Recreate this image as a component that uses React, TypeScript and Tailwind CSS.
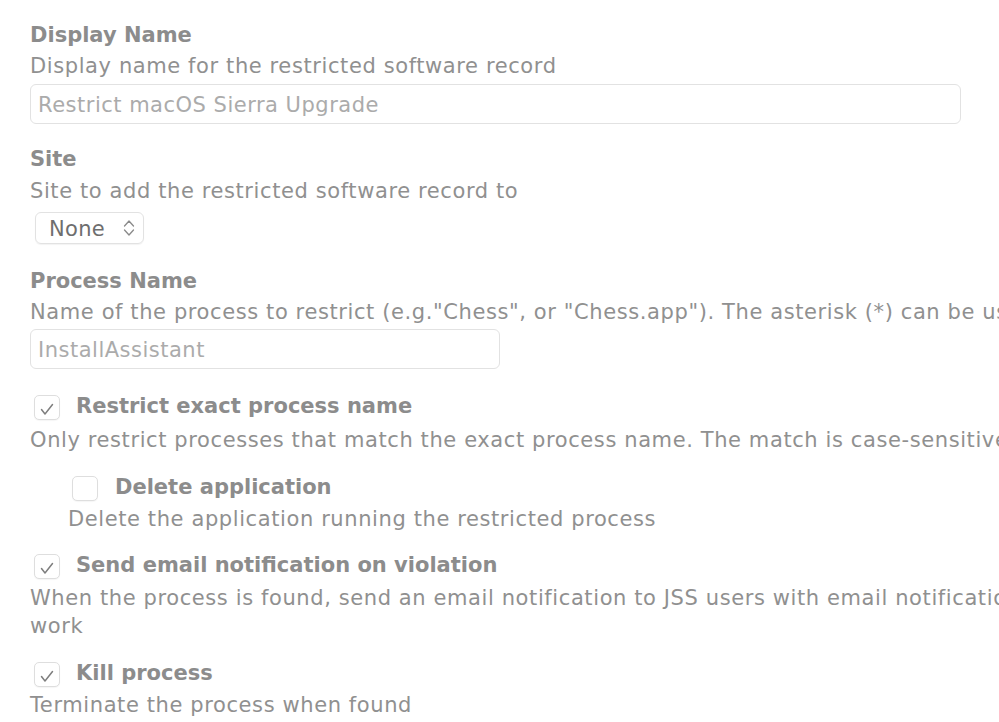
import React from "react";

const font = { fontFamily: '"DejaVu Sans", "Lucida Grande", sans-serif' };

function Check({ checked }: { checked: boolean }) {
  return (
    <div className="w-[26px] h-[25px] rounded-[5px] border border-[#dedede] bg-white flex items-end justify-center pb-[3px] shrink-0 shadow-[0_1px_1px_rgba(0,0,0,0.04)]">
      {checked && (
        <svg width="14" height="13" viewBox="0 0 14 13" fill="none">
          <path d="M1.5 6.5 L5 11 L12.5 1.5" stroke="#7e7e7e" strokeWidth="1.5" strokeLinecap="round" strokeLinejoin="round" />
        </svg>
      )}
    </div>
  );
}

const label = "font-bold text-[#8c8c8c] tracking-normal";

export default function App() {
  return (
    <div className="w-[999px] h-[722px] overflow-hidden bg-white text-[21px] leading-[28px] tracking-[0.6px] text-[#909090]" style={font}>
      <div className="pl-[30px] pt-[21px] whitespace-nowrap">
        <div className={label}>Display Name</div>
        <div className="mt-[3px]">Display name for the restricted software record</div>
        <div className="mt-[4px] w-[931px] h-[40px] rounded-[6px] border border-[#e2e2e2] flex items-center pl-[7px] pt-[1px] text-[#ababab] tracking-[0.5px]">
          Restrict macOS Sierra Upgrade
        </div>

        <div className={`mt-[21px] ${label}`}>Site</div>
        <div className="mt-[4px]">Site to add the restricted software record to</div>
        <div className="mt-[7px] ml-[5px] w-[109px] h-[32px] rounded-[6px] border border-[#e2e2e2] shadow-[0_1px_1px_rgba(0,0,0,0.05)] flex items-center justify-between pl-[13px] pr-[8px] text-[#6e6e6e] tracking-[0.3px]">
          <span className="pt-[1px]">None</span>
          <svg width="12" height="20" viewBox="0 0 12 20" fill="none">
            <path d="M1.5 8 L6 3 L10.5 8" stroke="#8a8a8a" strokeWidth="1.3" strokeLinecap="round" strokeLinejoin="round" />
            <path d="M1.5 12 L6 17 L10.5 12" stroke="#8a8a8a" strokeWidth="1.3" strokeLinecap="round" strokeLinejoin="round" />
          </svg>
        </div>

        <div className={`mt-[23px] ${label}`}>Process Name</div>
        <div className="mt-[3px]">Name of the process to restrict (e.g."Chess", or "Chess.app"). The asterisk (*) can be used as a wildcard</div>
        <div className="mt-[3px] w-[470px] h-[40px] rounded-[6px] border border-[#e2e2e2] flex items-center pl-[7px] pt-[1px] text-[#ababab] tracking-[0.5px]">
          InstallAssistant
        </div>

        <div className="mt-[24px] ml-[4px] h-[28px] flex items-center gap-[16px]">
          <Check checked />
          <span className={`${label} -mt-[3px]`}>Restrict exact process name</span>
        </div>
        <div className="mt-[5px]">Only restrict processes that match the exact process name. The match is case-sensitive</div>

        <div className="ml-[38px]">
          <div className="mt-[20px] ml-[4px] h-[28px] flex items-center gap-[17px]">
            <Check checked={false} />
            <span className={`${label} -mt-[3px]`}>Delete application</span>
          </div>
          <div className="mt-[3px]">Delete the application running the restricted process</div>
        </div>

        <div className="mt-[19px] ml-[4px] h-[28px] flex items-center gap-[16px]">
          <Check checked />
          <span className={`${label} -mt-[3px]`}>Send email notification on violation</span>
        </div>
        <div className="mt-[4px]">
          When the process is found, send an email notification to JSS users with email notifications enabled. This requires an SMTP server to be set up for this to
          <br />
          work
        </div>

        <div className="mt-[20px] ml-[4px] h-[28px] flex items-center gap-[16px]">
          <Check checked />
          <span className={`${label} -mt-[3px]`}>Kill process</span>
        </div>
        <div className="mt-[3px]">Terminate the process when found</div>
      </div>
    </div>
  );
}
